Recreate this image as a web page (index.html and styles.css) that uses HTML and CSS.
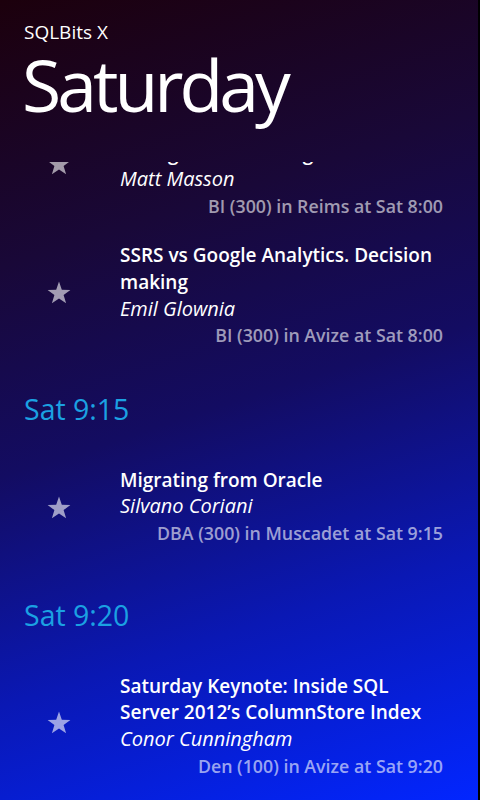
FILE: index.html
```html
<!DOCTYPE html>
<html>
<head>
<meta charset="utf-8">
<link rel="stylesheet" href="styles.css">
</head>
<body>
<div class="screen">
  <header class="header">
    <div class="app-title">SQLBits X</div>
    <div class="page-title">Saturday</div>
  </header>
  <div class="viewport">
    <div class="list">
      <section class="group">
        <div class="group-title">Sat 8:00</div>
        <div class="item">
          <div class="star-col"><svg class="star" viewBox="0 0 24 24"><polygon points="12,0.6 14.8,8.7 23.4,8.9 16.6,14.1 19.1,22.3 12,17.5 4.9,22.3 7.4,14.1 0.6,8.9 9.2,8.7"/></svg></div>
          <div class="text">
            <div class="title">SSIS 2012 Deployment and Configuration Management</div>
            <div class="author">Matt Masson</div>
            <div class="meta">BI (300) in Reims at Sat 8:00</div>
          </div>
        </div>
        <div class="item">
          <div class="star-col"><svg class="star" viewBox="0 0 24 24"><polygon points="12,0.6 14.8,8.7 23.4,8.9 16.6,14.1 19.1,22.3 12,17.5 4.9,22.3 7.4,14.1 0.6,8.9 9.2,8.7"/></svg></div>
          <div class="text">
            <div class="title">SSRS vs Google Analytics. Decision making</div>
            <div class="author">Emil Glownia</div>
            <div class="meta">BI (300) in Avize at Sat 8:00</div>
          </div>
        </div>
      </section>
      <section class="group">
        <div class="group-title">Sat 9:15</div>
        <div class="item">
          <div class="star-col"><svg class="star" viewBox="0 0 24 24"><polygon points="12,0.6 14.8,8.7 23.4,8.9 16.6,14.1 19.1,22.3 12,17.5 4.9,22.3 7.4,14.1 0.6,8.9 9.2,8.7"/></svg></div>
          <div class="text">
            <div class="title">Migrating from Oracle</div>
            <div class="author">Silvano Coriani</div>
            <div class="meta">DBA (300) in Muscadet at Sat 9:15</div>
          </div>
        </div>
      </section>
      <section class="group">
        <div class="group-title">Sat 9:20</div>
        <div class="item">
          <div class="star-col"><svg class="star" viewBox="0 0 24 24"><polygon points="12,0.6 14.8,8.7 23.4,8.9 16.6,14.1 19.1,22.3 12,17.5 4.9,22.3 7.4,14.1 0.6,8.9 9.2,8.7"/></svg></div>
          <div class="text">
            <div class="title">Saturday Keynote: Inside SQL Server 2012’s ColumnStore Index</div>
            <div class="author">Conor Cunningham</div>
            <div class="meta">Den (100) in Avize at Sat 9:20</div>
          </div>
        </div>
      </section>
    </div>
  </div>
</div>
</body>
</html>
```
FILE: styles.css
```css
html, body {
  margin: 0;
  padding: 0;
  background: #000;
}
body {
  width: 480px;
  height: 800px;
  overflow: hidden;
  font-family: "Open Sans", "Noto Sans", "DejaVu Sans", sans-serif;
  color: #fff;
}
.screen {
  width: 478px;
  height: 800px;
  display: flex;
  flex-direction: column;
  background: linear-gradient(162deg, #1c000c 0%, #190838 28%, #130c62 50%, #0a18b4 74%, #0226ff 100%);
  overflow: hidden;
}
.header {
  padding: 19px 0 0 24px;
  flex: none;
}
.app-title {
  font-size: 19px;
  line-height: 27px;
  font-weight: 400;
}
.page-title {
  margin-top: 3px;
  margin-left: -2px;
  font-size: 71.5px;
  line-height: 72px;
  font-weight: 400;
  letter-spacing: -4px;
}
.viewport {
  margin-top: 40.5px;
  flex: 1;
  overflow: hidden;
}
.list {
  margin-top: -127px;
}
.group + .group {
  padding-top: 16.5px;
}
.group-title {
  margin: 0 0 36.5px 24px;
  font-size: 28.5px;
  line-height: 42px;
  color: #1ba1e2;
}
.item {
  display: flex;
  align-items: center;
  min-height: 88px;
  margin-bottom: 23px;
}
.star-col {
  width: 118px;
  flex: none;
  display: flex;
  justify-content: center;
  padding-bottom: 5px;
}
.star {
  width: 24px;
  height: 24px;
  fill: rgba(255, 255, 255, 0.6);
}
.text {
  width: 323px;
  margin-left: 2px;
  align-self: flex-start;
}
.title {
  font-size: 19px;
  line-height: 26.6px;
  font-weight: 600;
}
.author {
  font-size: 20px;
  line-height: 26.6px;
  font-style: italic;
}
.meta {
  font-size: 17.8px;
  line-height: 26.6px;
  font-weight: 600;
  text-align: right;
  color: rgba(255, 255, 255, 0.6);
}
```
